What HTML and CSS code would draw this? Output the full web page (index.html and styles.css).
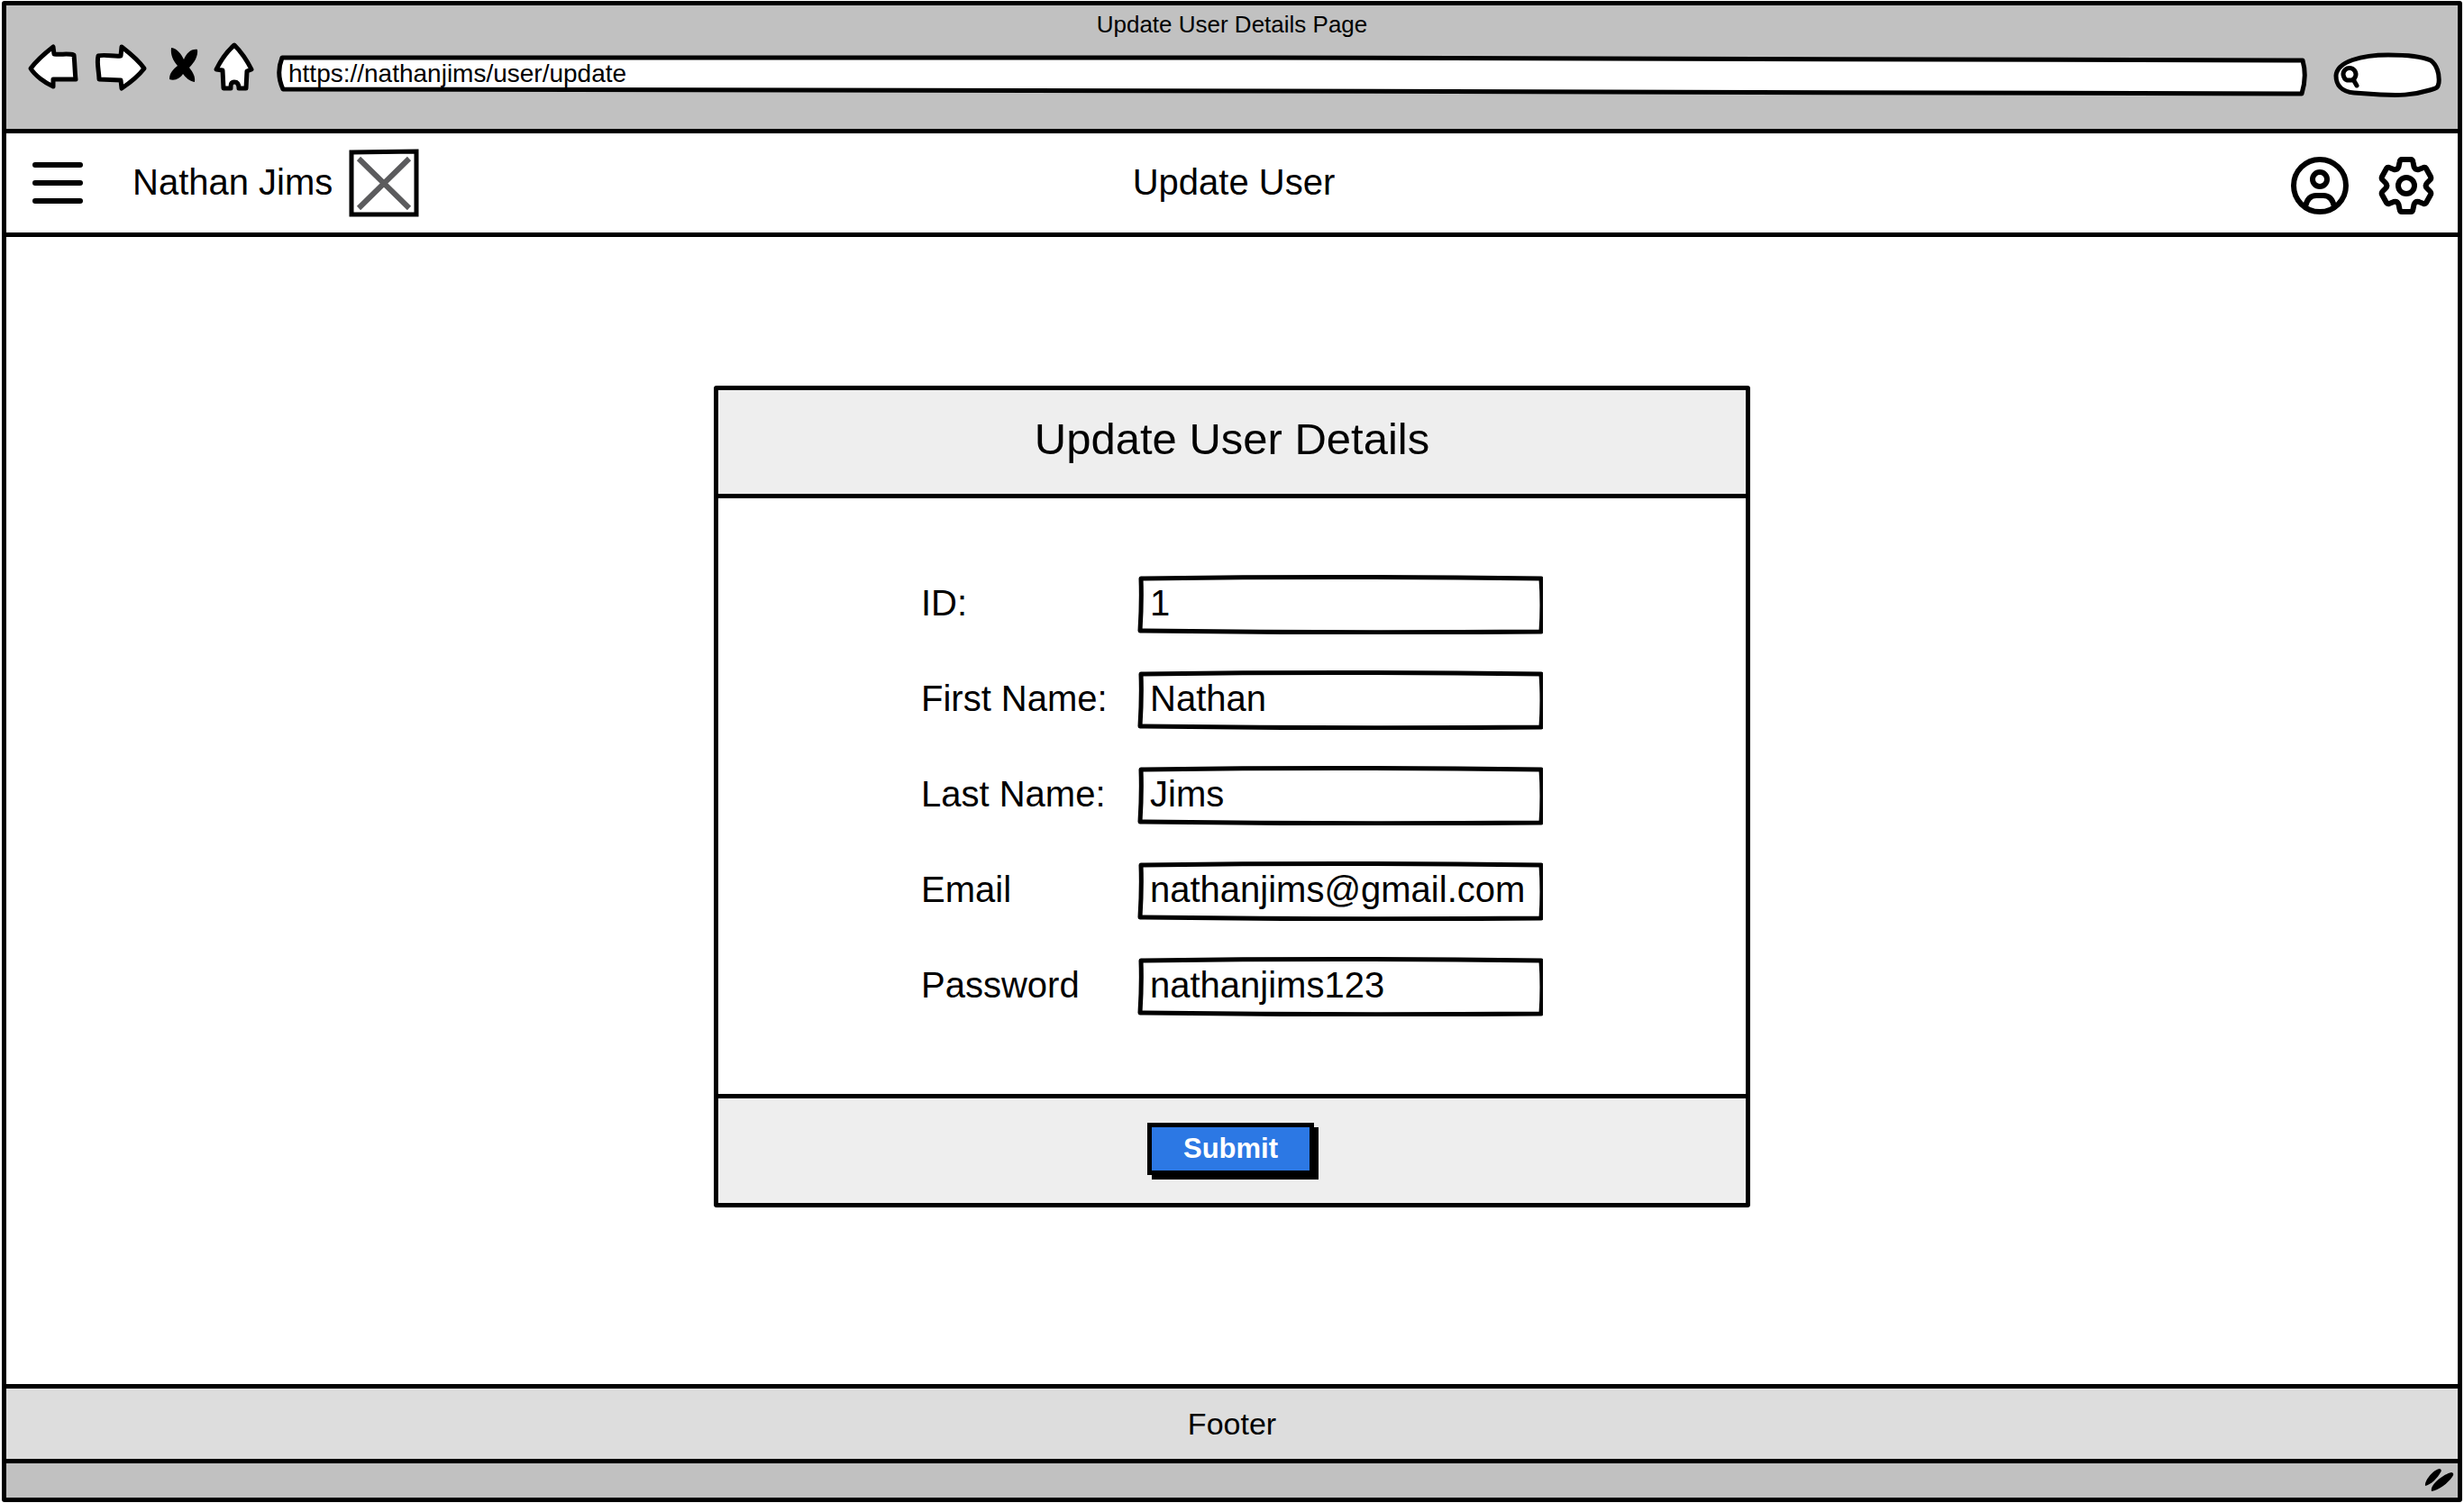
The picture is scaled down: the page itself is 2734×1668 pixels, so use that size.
FILE: index.html
```html
<!DOCTYPE html>
<html lang="en">
<head>
<meta charset="utf-8">
<title>Update User Details Page</title>
<link rel="stylesheet" href="styles.css">
</head>
<body>
<div class="window">
  <div class="chrome">
    <p class="chrome-title">Update User Details Page</p>
    <div class="toolbar">
      <button class="icon-button" type="button" aria-label="Back">
        <svg width="58" height="56" viewBox="30 45 58 56"><path class="outline" d="M34 75C40 67 50 58 59 51L60 59C67 60 76 58 82 60C83 69 83 79 84 87L59 87L59 95C50 91 39 83 34 75Z"/></svg>
      </button>
      <button class="icon-button" type="button" aria-label="Forward">
        <svg width="60" height="56" viewBox="104 45 60 56"><path class="outline" d="M109 61C116 59 126 62 134 61L135 51C144 58 154 66 160 75C153 84 144 91 135 97L134 88L110 87C110 79 107 69 109 61Z"/></svg>
      </button>
      <button class="icon-button" type="button" aria-label="Stop">
        <svg width="41" height="56" viewBox="180 45 41 56"><path d="M190 52C197 53 201 59 204 65C207 58 212 53 219 54C220 61 216 68 210 74C214 79 217 84 216 90C210 89 206 85 203 81C200 86 194 89 188 87C188 80 192 76 197 72C192 66 189 60 190 52Z"/></svg>
      </button>
      <button class="icon-button" type="button" aria-label="Home">
        <svg width="53" height="56" viewBox="237 45 53 56"><path class="outline" d="M260 49C267 56 274 66 279 76L274 78L273 97L265 97C265 93 264 90 260 90C256 90 256 93 256 97L248 97L247 77L240 76C245 66 252 56 260 49Z"/></svg>
      </button>
      <div class="address">
        <svg class="frame" viewBox="0 0 2254 50" preserveAspectRatio="none" aria-hidden="true"><path class="outline" d="M7 6L1100 6L2249 9Q2254 27 2248 46L1100 43L8 41Q0 24 7 6Z"/></svg>
        <input class="address-input" type="text" aria-label="Address" value="https://nathanjims/user/update">
      </div>
      <div class="search">
        <svg class="frame" viewBox="0 0 133 50" aria-hidden="true"><path class="outline" d="M16 26C17 10 45 3 74 3C95 3 112 5 121 9C128 14 131 24 130 34C129 40 127 40 120 42C100 48 85 48 65 47L36 45C22 44 16 36 16 26Z"/><path class="outline" d="M24 25A7 7 0 1 1 37 28L35 31L28 31Q25 30 24 25ZM35 30L39 37"/></svg>
        <input class="search-input" type="search" aria-label="Search">
      </div>
    </div>
  </div>

  <header class="app-header">
    <div class="brand">
      <button class="icon-button" type="button" aria-label="Menu">
        <svg width="56" height="46" viewBox="0 0 56 46"><path class="line" d="M3 3H53M3 23H53M3 43H53"/></svg>
      </button>
      <span class="brand-name">Nathan Jims</span>
      <svg class="picture" width="78" height="76" viewBox="0 0 78 76" role="img" aria-label="Profile picture"><path class="outline picture-frame" d="M3 4L75 3L75 73L3 73Z"/><path class="cross" d="M11 11L67 66M67 11L11 66"/></svg>
    </div>
    <h1 class="app-title">Update User</h1>
    <nav class="actions">
      <button class="icon-button" type="button" aria-label="Account">
        <svg width="64" height="72" viewBox="-32 -39 64 72"><circle class="line" r="29"/><circle class="line" cy="-7" r="8"/><path class="line" d="M-16 23C-14 14 -9 11 -4 11H4C9 11 14 14 16 23"/></svg>
      </button>
      <button class="icon-button" type="button" aria-label="Settings">
        <svg width="64" height="72" viewBox="-32 -39 64 72"><circle class="line" r="9"/><path class="line" d="M-5 -29H5Q7 -29 7.500 -26L8.500 -21Q10 -17 14 -18L19 -20Q21 -20.500 22 -19L27 -10Q28 -8 26 -6L23 -3Q20 0 23 3L26 6Q28 8 27 10L22 19Q21 20.500 19 20L14 18Q10 17 8.500 21L7.500 26Q7 29 5 29H-5Q-7 29 -7.500 26L-8.500 21Q-10 17 -14 18L-19 20Q-21 20.500 -22 19L-27 10Q-28 8 -26 6L-23 3Q-20 0 -23 -3L-26 -6Q-28 -8 -27 -10L-22 -19Q-21 -20.500 -19 -20L-14 -18Q-10 -17 -8.500 -21L-7.500 -26Q-7 -29 -5 -29Z"/></svg>
      </button>
    </nav>
  </header>

  <main class="content">
    <form class="card">
      <h2 class="card-title">Update User Details</h2>
      <div class="fields">
        <label for="user-id">ID:</label>
        <div class="field">
          <svg class="frame" viewBox="0 0 450 66" preserveAspectRatio="none" aria-hidden="true"><path class="outline" d="M4 4Q225 1 448 4Q450 33 448 63Q225 65 3 62Q5 30 4 4Z"/></svg>
          <input class="field-input" id="user-id" type="text" value="1">
        </div>
        <label for="first-name">First Name:</label>
        <div class="field">
          <svg class="frame" viewBox="0 0 450 66" preserveAspectRatio="none" aria-hidden="true"><path class="outline" d="M4 4Q225 1 448 4Q450 33 448 63Q225 65 3 62Q5 30 4 4Z"/></svg>
          <input class="field-input" id="first-name" type="text" value="Nathan">
        </div>
        <label for="last-name">Last Name:</label>
        <div class="field">
          <svg class="frame" viewBox="0 0 450 66" preserveAspectRatio="none" aria-hidden="true"><path class="outline" d="M4 4Q225 1 448 4Q450 33 448 63Q225 65 3 62Q5 30 4 4Z"/></svg>
          <input class="field-input" id="last-name" type="text" value="Jims">
        </div>
        <label for="email">Email</label>
        <div class="field">
          <svg class="frame" viewBox="0 0 450 66" preserveAspectRatio="none" aria-hidden="true"><path class="outline" d="M4 4Q225 1 448 4Q450 33 448 63Q225 65 3 62Q5 30 4 4Z"/></svg>
          <input class="field-input" id="email" type="email" value="nathanjims@gmail.com">
        </div>
        <label for="password">Password</label>
        <div class="field">
          <svg class="frame" viewBox="0 0 450 66" preserveAspectRatio="none" aria-hidden="true"><path class="outline" d="M4 4Q225 1 448 4Q450 33 448 63Q225 65 3 62Q5 30 4 4Z"/></svg>
          <input class="field-input" id="password" type="text" value="nathanjims123">
        </div>
      </div>
      <div class="card-footer">
        <button class="submit" type="submit">Submit</button>
      </div>
    </form>
  </main>

  <footer class="app-footer">Footer</footer>
  <div class="status-bar">
    <svg width="33" height="26" viewBox="2690 1630 33 26" aria-hidden="true"><path d="M2691 1649C2690 1643 2700 1631 2707 1630Q2710 1631 2708 1634C2705 1640 2697 1648 2691 1649ZM2698 1655C2696 1648 2711 1636 2720 1634Q2724 1635 2721 1639C2716 1646 2706 1654 2698 1655Z"/></svg>
  </div>
</div>
</body>
</html>
```

FILE: styles.css
```css
* {
  box-sizing: border-box;
}

body {
  margin: 0;
  padding: 1px 2px;
  background: #fff;
  color: #000;
  font-family: "Liberation Sans", Arial, sans-serif;
  font-size: 40px;
  line-height: 48px;
}

h1,
h2,
p {
  margin: 0;
  font-weight: 400;
}

svg {
  display: block;
}

input,
button {
  color: inherit;
  font: inherit;
}

.window {
  display: flex;
  flex-direction: column;
  min-height: calc(100vh - 2px);
  border: 5px solid #000;
  border-radius: 3px;
}

.outline {
  fill: #fff;
  stroke: #000;
  stroke-width: 5px;
  stroke-linejoin: round;
  stroke-linecap: round;
  vector-effect: non-scaling-stroke;
}

.picture-frame {
  stroke-linejoin: miter;
}

.line {
  fill: none;
  stroke: #000;
  stroke-width: 6px;
  stroke-linejoin: round;
  stroke-linecap: round;
}

.cross {
  fill: none;
  stroke: #5b5b5d;
  stroke-width: 6px;
}

.icon-button {
  flex: none;
  padding: 0;
  border: 0;
  background: none;
}

/* Browser bar */

.chrome {
  padding-bottom: 35px;
  border-bottom: 5px solid #000;
  background: #c1c1c1;
}

.chrome-title {
  padding-top: 2px;
  font-size: 26px;
  line-height: 38px;
  text-align: center;
}

.toolbar {
  display: flex;
  align-items: flex-start;
  gap: 16px;
  height: 62px;
  padding: 0 18px 0 23px;
}

.address,
.search,
.field {
  display: grid;
}

.address,
.search {
  align-self: flex-end;
  height: 50px;
}

.address {
  flex: 1;
}

.search {
  width: 133px;
}

.frame,
.address-input,
.search-input,
.field-input {
  grid-area: 1 / 1;
  width: 100%;
  height: 100%;
  min-width: 0;
  border: 0;
  background: none;
  outline: 0;
}

.address-input {
  padding: 0 14px 2px;
  font-size: 28px;
}

.search-input {
  padding: 0 12px 0 48px;
  font-size: 26px;
  appearance: none;
}

/* Application header */

.app-header {
  display: grid;
  grid-template-columns: 1fr auto 1fr;
  align-items: center;
  height: 115px;
  padding: 0 25px 0 29px;
  border-bottom: 5px solid #000;
}

.brand {
  display: flex;
  align-items: center;
}

.brand-name {
  padding: 0 18px 3px 55px;
}

.app-title {
  padding-bottom: 3px;
  font-size: 40px;
}

.actions {
  display: flex;
  justify-content: flex-end;
  gap: 32px;
}

/* Form card */

.content {
  display: flex;
  flex: 1;
  align-items: center;
  justify-content: center;
  padding-bottom: 32px;
}

.card {
  width: 1150px;
  max-width: 100%;
  border: 5px solid #000;
  border-radius: 3px;
}

.card-title {
  padding: 24px 0 31px;
  border-bottom: 5px solid #000;
  background: #eee;
  font-size: 49px;
  line-height: 60px;
  text-align: center;
}

.fields {
  display: grid;
  grid-template-columns: 240px 450px;
  justify-content: center;
  align-items: center;
  row-gap: 40px;
  padding: 85px 0 86px;
}

.fields label {
  padding-bottom: 3px;
}

.field {
  height: 66px;
}

.field-input {
  padding: 0 14px 3px;
}

.card-footer {
  display: flex;
  justify-content: center;
  padding: 27px 3px 31px 0;
  border-top: 5px solid #000;
  background: #eee;
}

.submit {
  width: 185px;
  height: 58px;
  padding: 0;
  border: 5px solid #000;
  background: #2c78e4;
  box-shadow: 5px 5px 0 #000;
  color: #fff;
  font-size: 31px;
  font-weight: 700;
}

/* Footer and status bar */

.app-footer {
  border-top: 5px solid #000;
  border-bottom: 5px solid #000;
  background: #ddd;
  font-size: 34px;
  line-height: 78px;
  text-align: center;
}

.status-bar {
  display: flex;
  align-items: center;
  justify-content: flex-end;
  height: 38px;
  padding-right: 4px;
  background: #c1c1c1;
}
```
